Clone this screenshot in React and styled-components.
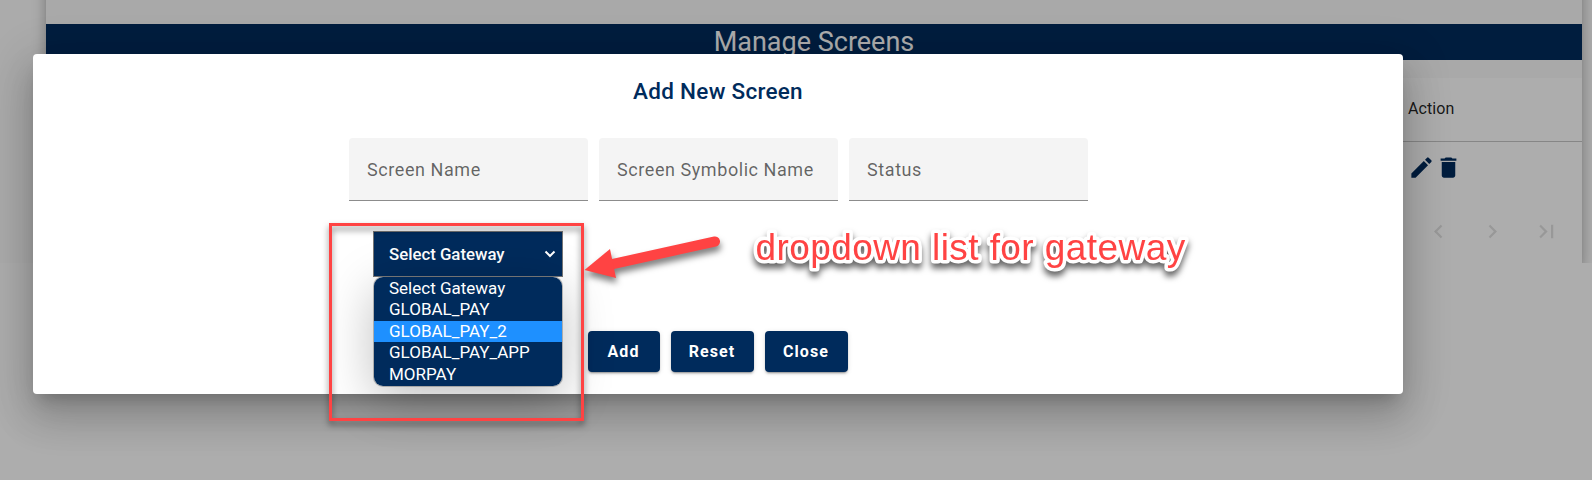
import React from "react";
import styled, { createGlobalStyle } from "styled-components";

const Global = createGlobalStyle`
  * { box-sizing: border-box; }
  html, body { margin: 0; height: 480px; overflow: hidden; background: #fff; }
  body { font-family: Roboto, "Liberation Sans", sans-serif; }
`;

const Page = styled.div`
  position: relative;
  width: 1592px;
  height: 480px;
  overflow: hidden;
`;

const Content = styled.main`
  height: 263px;
  display: flex;
  flex-direction: column;
  justify-content: flex-end;
  padding: 0 10px 0 46px;
  overflow: hidden;
  background: #fcfcfc;
`;

const Card = styled.section`
  flex: none;
  height: 303px;
  display: flex;
  flex-direction: column;
  background: #fff;
  box-shadow: 0 5px 5px -3px rgba(0, 0, 0, 0.2), 0 8px 10px 1px rgba(0, 0, 0, 0.14),
    0 3px 14px 2px rgba(0, 0, 0, 0.12);
`;

const Spacer = styled.div`
  height: ${(p) => p.$height}px;
  background: #fafafa;
`;

const Banner = styled.h1`
  height: 36px;
  margin: 0;
  background: #002b5c;
  color: #fff;
  font-size: 27px;
  font-weight: 400;
  line-height: 36px;
  text-align: center;
`;

const HeaderRow = styled.div`
  height: 64px;
  display: flex;
  align-items: center;
  justify-content: flex-end;
  padding-bottom: 3px;
  border-bottom: 1px solid #c6c6c6;
`;

const ActionCell = styled.div`
  width: 174px;
  display: flex;
  color: ${(p) => (p.$navy ? "#002b5c" : "rgba(0, 0, 0, 0.87)")};
  font-size: 16px;
  font-weight: 400;
  letter-spacing: 0.1px;
`;

const BodyRow = styled.div`
  height: 50px;
  display: flex;
  align-items: center;
  justify-content: flex-end;
`;

const Pager = styled.div`
  height: 71px;
  display: flex;
  align-items: center;
  justify-content: flex-end;
  gap: 27px;
  padding: 8px 22px 0 0;
  color: #e1e1e1;
`;

const Icon = styled.svg`
  width: 27px;
  height: 27px;
  flex: none;
  fill: currentColor;
`;

const Backdrop = styled.div`
  position: absolute;
  inset: 0;
  padding: 54px 0 0 33px;
  background: rgba(0, 0, 0, 0.32);
`;

const Dialog = styled.div`
  width: 1370px;
  height: 340px;
  padding-top: 24px;
  border-radius: 4px;
  background: #fff;
  box-shadow: 0 11px 15px -7px rgba(0, 0, 0, 0.2), 0 24px 38px 3px rgba(0, 0, 0, 0.14),
    0 9px 46px 8px rgba(0, 0, 0, 0.12);
`;

const Title = styled.h2`
  height: 26px;
  margin: 0 0 34px;
  color: #002b5c;
  font-size: 22.5px;
  font-weight: 500;
  letter-spacing: 0.28px;
  line-height: 26px;
  text-align: center;
`;

const Fields = styled.div`
  display: flex;
  justify-content: center;
  gap: 11px;
  margin-bottom: 30px;
`;

const Field = styled.div`
  width: 239px;
  height: 63px;
  padding: 0 18px 0 18.6px;
  border-bottom: 1px solid #8c8c8c;
  border-radius: 4px 4px 0 0;
  background: #f4f4f4;
  color: rgba(0, 0, 0, 0.6);
  font-size: 18px;
  letter-spacing: 0.56px;
  line-height: 63px;
  white-space: nowrap;
`;

const Gateway = styled.div`
  position: relative;
  width: 190px;
  height: 46px;
  margin: 0 0 54px 340px;
`;

const Select = styled.div`
  height: 46px;
  display: flex;
  align-items: center;
  justify-content: space-between;
  padding: 0 6px 0 15px;
  border: 1px solid #767676;
  background: #002b5c;
  color: #fff;
  font-size: 16.8px;
  font-weight: 500;
`;

const Caret = styled.svg`
  width: 12px;
  height: 10px;
  fill: none;
  stroke: #fff;
  stroke-width: 2;
`;

const Menu = styled.div`
  position: absolute;
  top: 46px;
  left: 1px;
  width: 188px;
  height: 109px;
  padding-top: 1px;
  overflow: hidden;
  border-radius: 9px;
  background: #002b5c;
`;

const MenuShadow = styled.div`
  position: absolute;
  top: 46px;
  left: 1px;
  width: 188px;
  height: 109px;
  border-radius: 9px;
  box-shadow: 0 0 0 1px rgba(120, 120, 120, 0.5), 0 12px 50px rgba(0, 0, 0, 0.26);
`;

const Option = styled.div`
  height: 21.4px;
  padding-left: 15px;
  background: ${(p) => (p.$active ? "#1e90ff" : "transparent")};
  color: #fff;
  font-size: 17px;
  line-height: 21.4px;
`;

const Actions = styled.div`
  display: flex;
  justify-content: center;
  gap: 11px;
`;

const Button = styled.button`
  width: ${(p) => p.$width}px;
  height: 41px;
  padding: 0 1px 0 0;
  border: 0;
  border-radius: 4px;
  background: #002b5c;
  color: #fff;
  font: 700 16px Roboto, "Liberation Sans", sans-serif;
  letter-spacing: 1.1px;
  box-shadow: 0 3px 1px -2px rgba(0, 0, 0, 0.2), 0 2px 2px rgba(0, 0, 0, 0.14),
    0 1px 5px rgba(0, 0, 0, 0.12);
`;

const Highlight = styled.div`
  position: absolute;
  top: 223px;
  left: 329px;
  width: 255px;
  height: 198px;
  border: 3px solid #ff4343;
  filter: drop-shadow(0 4px 3px rgba(0, 0, 0, 0.5));
`;

const Arrow = styled.svg`
  position: absolute;
  top: 225px;
  left: 575px;
  width: 160px;
  height: 70px;
  filter: drop-shadow(1px 5px 3px rgba(0, 0, 0, 0.5));
`;

const Note = styled.svg`
  position: absolute;
  top: 220px;
  left: 745px;
  width: 460px;
  height: 65px;
  fill: #ff4343;
  stroke: #fff;
  stroke-width: 7px;
  stroke-linejoin: round;
  paint-order: stroke fill;
  font: 37px "Liberation Sans", sans-serif;
  letter-spacing: 0.42px;
  filter: drop-shadow(0 5px 3px rgba(0, 0, 0, 0.6));
`;

const paths = {
  edit: "M3 17.25V21h3.75L17.81 9.94l-3.75-3.75L3 17.25zM20.71 7.04a1 1 0 0 0 0-1.41l-2.34-2.34a1 1 0 0 0-1.41 0l-1.83 1.83 3.75 3.75 1.83-1.83z",
  trash: "M6 19c0 1.1.9 2 2 2h8c1.1 0 2-.9 2-2V7H6v12zM19 4h-3.5l-1-1h-5l-1 1H5v2h14V4z",
  prev: "M15.41 7.41 14 6l-6 6 6 6 1.41-1.41L10.83 12z",
  next: "M10 6 8.59 7.41 13.17 12l-4.58 4.59L10 18l6-6z",
  last: "M5.59 7.41 10.18 12l-4.59 4.59L7 18l6-6-6-6zM16 6h2v12h-2z",
};

const Glyph = ({ name }) => (
  <Icon viewBox="0 0 24 24">
    <path d={paths[name]} />
  </Icon>
);

const gateways = ["Select Gateway", "GLOBAL_PAY", "GLOBAL_PAY_2", "GLOBAL_PAY_APP", "MORPAY"];

export default function App() {
  return (
    <Page>
      <Global />
      <Content>
        <Card>
          <Spacer $height={64} />
          <Banner>Manage Screens</Banner>
          <Spacer $height={18} />
          <HeaderRow>
            <ActionCell>Action</ActionCell>
          </HeaderRow>
          <BodyRow>
            <ActionCell $navy>
              <Glyph name="edit" />
              <Glyph name="trash" />
            </ActionCell>
          </BodyRow>
          <Pager>
            <Glyph name="prev" />
            <Glyph name="next" />
            <Glyph name="last" />
          </Pager>
        </Card>
      </Content>
      <Backdrop>
        <Dialog>
          <Title>Add New Screen</Title>
          <Fields>
            {["Screen Name", "Screen Symbolic Name", "Status"].map((label) => (
              <Field key={label}>{label}</Field>
            ))}
          </Fields>
          <Gateway>
            <MenuShadow />
            <Select>
              Select Gateway
              <Caret viewBox="0 0 12 10">
                <path d="M1.5 2.5 6 7l4.5-4.5" />
              </Caret>
            </Select>
            <Menu>
              {gateways.map((name) => (
                <Option key={name} $active={name === "GLOBAL_PAY_2"}>
                  {name}
                </Option>
              ))}
            </Menu>
          </Gateway>
          <Actions>
            <Button $width={72}>Add</Button>
            <Button $width={83}>Reset</Button>
            <Button $width={83}>Close</Button>
          </Actions>
        </Dialog>
      </Backdrop>
      <Highlight />
      <Arrow viewBox="575 225 160 70">
        <path d="M613 264 715 241.5" stroke="#ff4343" strokeWidth="10" strokeLinecap="round" />
        <path d="M584.5 270 610 249 616 278z" fill="#ff4343" />
      </Arrow>
      <Note>
        <text x="10.5" y="39.5">dropdown list for gateway</text>
      </Note>
    </Page>
  );
}
